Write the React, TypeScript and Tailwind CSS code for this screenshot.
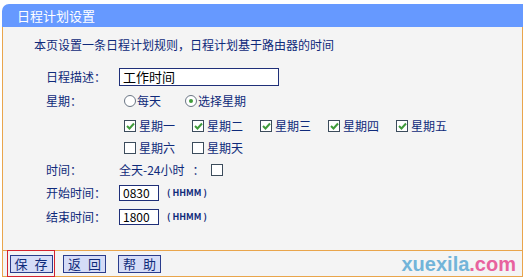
import React from "react";

const NAVY = "text-[#0f2a7a]";
const CJK = '"Noto Sans CJK SC", "Noto Sans", sans-serif';

function Check({ checked }: { checked?: boolean }) {
  return (
    <span className="inline-flex h-[12px] w-[12px] shrink-0 items-center justify-center border border-[#3c4c5c] bg-white">
      {checked && (
        <svg width="9" height="8" viewBox="0 0 9 8">
          <path d="M1 4 L3.5 6.5 L8 1.5" fill="none" stroke="#3f9b3a" strokeWidth="2" />
        </svg>
      )}
    </span>
  );
}

function Radio({ checked }: { checked?: boolean }) {
  return (
    <span className="inline-flex h-[12px] w-[12px] shrink-0 items-center justify-center rounded-full border border-[#6b7685] bg-white">
      {checked && <span className="h-[4px] w-[4px] rounded-full bg-[#3f9b3a]" />}
    </span>
  );
}

function Day({ label, checked }: { label: string; checked?: boolean }) {
  return (
    <label className="flex w-[68px] items-center gap-[3px]">
      <Check checked={checked} />
      <span>{label}</span>
    </label>
  );
}

function Row({ label, h, children }: { label: string; h: string; children?: React.ReactNode }) {
  return (
    <div className={`flex items-center ${h}`}>
      <div className="w-[73px]">{label}</div>
      <div className="flex items-center">{children}</div>
    </div>
  );
}

function Btn({ a, b }: { a: string; b: string }) {
  return (
    <button className="flex h-[18px] w-[43px] items-center justify-center gap-[7px] border border-[#2a3c8c] bg-[#d5dcf7] text-[13px] leading-none text-[#0f2a7a]">
      <span>{a}</span>
      <span>{b}</span>
    </button>
  );
}

export default function App() {
  const days1 = ["星期一", "星期二", "星期三", "星期四", "星期五"];
  return (
    <div className="h-[278px] w-[525px] bg-white pt-[4px]" style={{ fontFamily: CJK }}>
      <div className="ml-[2px] w-[521px]">
        {/* title bar */}
        <div className="flex h-[23px] items-center rounded-tl-[7px] bg-[#6699ff] pl-[15px] text-[13px] text-white">
          日程计划设置
        </div>

        {/* body */}
        <div className={`h-[223px] border-x border-[#e9a54c] bg-[#f4f4f4] pl-[31px] pt-[9px] text-[12px] ${NAVY}`}>
          <div className="flex h-[18px] items-center">本页设置一条日程计划规则，日程计划基于路由器的时间</div>
          <div className="pl-[12px] pt-[12px]">
            <Row label="日程描述：" h="h-[21px]">
              <div className="flex h-[18px] w-[160px] items-center border border-[#1f2f78] bg-white pl-[3px] text-[13px] text-black">
                工作时间
              </div>
            </Row>
            <Row label="星期：" h="h-[28px]">
              <label className="ml-[5px] flex w-[61px] items-center gap-[1px]">
                <Radio />
                <span>每天</span>
              </label>
              <label className="flex items-center gap-[1px]">
                <Radio checked />
                <span>选择星期</span>
              </label>
            </Row>
            <div className="flex h-[22px] items-center pl-[78px]">
              {days1.map((d) => (
                <Day key={d} label={d} checked />
              ))}
            </div>
            <div className="flex h-[22px] items-center pl-[78px]">
              <Day label="星期六" />
              <Day label="星期天" />
            </div>
            <Row label="时间：" h="h-[22px]">
              <span>全天-24小时</span>
              <span className="ml-[8px] mr-[6px]">：</span>
              <Check />
            </Row>
            <Row label="开始时间：" h="h-[24px]">
              <div className="flex h-[16px] w-[40px] items-center border border-[#1f2f78] bg-white pl-[3px] text-[12px] text-black">
                0830
              </div>
              <span className="ml-[8px] text-[9px] font-bold">( HHMM )</span>
            </Row>
            <Row label="结束时间：" h="h-[24px]">
              <div className="flex h-[16px] w-[40px] items-center border border-[#1f2f78] bg-white pl-[3px] text-[12px] text-black">
                1800
              </div>
              <span className="ml-[8px] text-[9px] font-bold">( HHMM )</span>
            </Row>
          </div>
        </div>

        {/* button bar */}
        <div className="flex h-[27px] items-center border border-[#e9a54c] bg-[#f4f4f4] pl-[4px]">
          <div className="flex h-[27px] w-[48px] items-center justify-center border border-[#d4232f]">
            <Btn a="保" b="存" />
          </div>
          <div className="ml-[8px]">
            <Btn a="返" b="回" />
          </div>
          <div className="ml-[12px]">
            <Btn a="帮" b="助" />
          </div>
          <div
            className="ml-auto mr-[6px] text-[20px] font-bold leading-none"
            style={{ fontFamily: '"Liberation Sans", Arial, sans-serif' }}
          >
            <span className="text-[#72b4d9]">xuexila</span>
            <span className="text-[#e8629e]">.com</span>
          </div>
        </div>
      </div>
    </div>
  );
}
